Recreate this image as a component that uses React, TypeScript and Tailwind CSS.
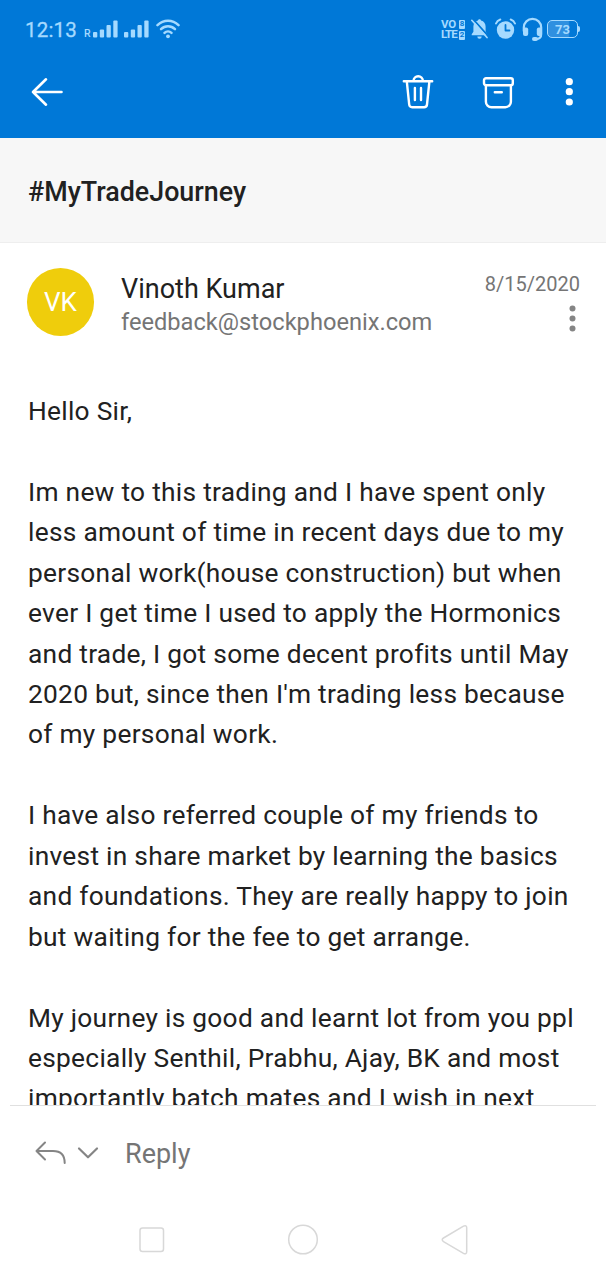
import type { ReactNode } from "react";

const paragraphs: string[][] = [
  ["Hello Sir,"],
  [
    "Im new to this trading and I have spent only",
    "less amount of time in recent days due to my",
    "personal work(house construction) but when",
    "ever I get time I used to apply the Hormonics",
    "and trade, I got some decent profits until May",
    "2020 but, since then I'm trading less because",
    "of my personal work.",
  ],
  [
    "I have also referred couple of my friends to",
    "invest in share market by learning the basics",
    "and foundations. They are really happy to join",
    "but waiting for the fee to get arrange.",
  ],
  [
    "My journey is good and learnt lot from you ppl",
    "especially Senthil, Prabhu, Ajay, BK and most",
    "importantly batch mates and I wish in next",
  ],
];

function Icon({ w, h, className, children }: { w: number; h: number; className?: string; children: ReactNode }) {
  return (
    <svg width={w} height={h} viewBox={`0 0 ${w} ${h}`} fill="none" strokeLinecap="round" strokeLinejoin="round" className={`shrink-0 ${className ?? ""}`}>
      {children}
    </svg>
  );
}

function Signal() {
  return (
    <Icon w={25} h={18}>
      <g fill="currentColor">
        <rect x="0" y="12" width="4.300" height="5.500" rx="1" />
        <rect x="6.800" y="9.500" width="4.300" height="8" rx="1" />
        <rect x="13.500" y="5" width="4.300" height="12.500" rx="1" />
        <rect x="20.300" y="0.500" width="4.300" height="17" rx="1" />
      </g>
    </Icon>
  );
}

function StatusBar() {
  return (
    <div className="flex h-[58px] items-center justify-between pl-[25px] pr-[26px] text-[#a5daff]">
      <div className="flex items-center">
        <span className="w-[59px] pt-[2px] text-[20.500px] leading-6 tracking-[0.200px] [-webkit-text-stroke:0.300px_currentColor]">12:13</span>
        <span className="mt-[9px] w-[9px] text-[10.500px] font-medium leading-3">R</span>
        <Signal />
        <div className="w-[6px]" />
        <Signal />
        <div className="w-[7px]" />
        <Icon w={24} h={20}>
          <g stroke="currentColor" strokeWidth="2.500">
            <path d="M1.500 6.200C7.500.4 16.500 .4 22.500 6.200" />
            <path d="M5 10.200c4-3.800 10-3.800 14 0" />
            <path d="M8.500 13.900c2-1.900 5-1.900 7 0" />
          </g>
          <circle cx="12" cy="17.300" r="1.900" fill="currentColor" />
        </Icon>
      </div>
      <div className="flex items-center">
        <div className="mr-[6px] mt-[2px] grid w-[24px] grid-cols-[18px_6px] text-[11.500px] font-bold">
          <span className="flex h-[10px] items-center leading-none tracking-[-0.300px]">VO</span>
          <span className="flex h-[9px] items-center justify-center rounded-[1px] bg-[#a5daff] text-[8px] leading-none text-[#0078d7]">8</span>
          <span className="flex h-[11px] items-center leading-none tracking-[-0.900px]">LTE</span>
          <span className="mt-px flex h-[9px] items-center justify-center rounded-[1px] bg-[#a5daff] text-[8px] leading-none text-[#0078d7]">2</span>
        </div>
        <Icon w={17} h={22}>
          <path d="M8.500 1.200c.9 0 1.500.6 1.500 1.400 3 .7 4.600 3 4.600 6v5.200l1.700 2.400v1H.7v-1l1.700-2.400V8.600c0-3 1.700-5.300 4.600-6 0-.8.6-1.400 1.500-1.400ZM6.300 18.500h4.400a2.200 2.200 0 0 1-4.400 0Z" fill="currentColor" />
          <path d="M1.500 .5 17.500 18.500" stroke="#0078d7" strokeWidth="1.800" />
          <path d="M.8 2.300 16 19.500" stroke="currentColor" strokeWidth="1.700" />
        </Icon>
        <div className="w-[7px]" />
        <Icon w={21} h={22}>
          <circle cx="10.500" cy="12" r="8.700" fill="currentColor" />
          <path d="M10.500 7v5.500h4" stroke="#0078d7" strokeWidth="1.800" />
          <path d="M1 5.500C1.800 3.500 3.300 2.200 5.300 1.500M20 5.500c-.8-2-2.300-3.300-4.300-4" stroke="currentColor" strokeWidth="2" />
        </Icon>
        <div className="w-[6px]" />
        <Icon w={21} h={25}>
          <path d="M1.800 14V10.500a8.700 8.700 0 0 1 17.400 0V17c0 3-1.500 5-5 5" stroke="currentColor" strokeWidth="2.200" />
          <rect x="1" y="10.500" width="5.200" height="8.500" rx="2" fill="currentColor" />
          <rect x="14.800" y="10.500" width="5.200" height="8.500" rx="2" fill="currentColor" />
          <rect x="10" y="20" width="6" height="4" rx="2" fill="currentColor" />
        </Icon>
        <div className="w-[4px]" />
        <div className="flex items-center">
          <div className="flex h-[18px] w-[31px] items-center justify-center rounded-[5px] border-[1.500px] border-[#a5daff] bg-linear-to-r from-[#2f90e0] from-70% to-[#0078d7] to-75% text-[13px] font-bold leading-none">73</div>
          <div className="h-[6px] w-[2px] rounded-r bg-[#a5daff]" />
        </div>
      </div>
    </div>
  );
}

function ActionBar() {
  return (
    <div className="flex h-[80px] items-start pl-[31px] pt-[15px] text-white">
      <Icon w={33} h={38}>
        <path d="M30.500 19H2M15 6.300 2 19l13 12.700" stroke="currentColor" strokeWidth="2.600" />
      </Icon>
      <Icon w={32} h={38} className="ml-[338px]">
        <g stroke="currentColor" strokeWidth="2.400">
          <path d="M1.800 8.300h28.400M11.500 8a4.700 4.700 0 0 1 9.400 0M4.800 8.300l2.400 23.200c.2 1.700 1.200 2.700 2.900 2.700h12c1.700 0 2.700-1 2.900-2.700L27.400 8.300" />
          <path d="M12.900 15v12M19 15v12" />
        </g>
      </Icon>
      <Icon w={33} h={38} className="ml-[48px]">
        <g stroke="currentColor" strokeWidth="2.400">
          <rect x="2" y="5.200" width="28.800" height="7" rx="2" />
          <path d="M3.900 12.200V28.700a5.500 5.500 0 0 0 5.500 5.500h14a5.500 5.500 0 0 0 5.500-5.500V12.200M12.800 19.300h7" />
        </g>
      </Icon>
      <Icon w={8} h={38} className="ml-[50px]">
        <g fill="currentColor">
          <circle cx="4.300" cy="8.700" r="3.600" />
          <circle cx="4.300" cy="18.700" r="3.600" />
          <circle cx="4.300" cy="29" r="3.600" />
        </g>
      </Icon>
    </div>
  );
}

export default function App() {
  return (
    <div className="flex h-[1280px] w-[606px] flex-col overflow-hidden bg-white font-['Roboto',sans-serif] text-[#212121]">
      <header className="h-[138px] shrink-0 bg-[#0078d7]">
        <StatusBar />
        <ActionBar />
      </header>

      <div className="flex h-[105px] shrink-0 items-center border-b border-[#eeeeee] bg-[#f7f7f7] pl-[28px] pt-[4px]">
        <h1 className="whitespace-nowrap text-[26.850px] font-medium leading-8">#MyTradeJourney</h1>
      </div>

      <section className="flex h-[148px] shrink-0 pl-[27px] pt-[25px]">
        <div className="flex h-[68px] w-[67px] shrink-0 items-center justify-center rounded-full bg-[#efcd0c] pt-px text-[26px] text-white">VK</div>
        <div className="ml-[27px] w-[350px] pt-[5px]">
          <div className="whitespace-nowrap text-[27px] leading-[33px]">Vinoth Kumar</div>
          <div className="whitespace-nowrap text-[23.650px] leading-[32px] text-[#757575]">feedback@stockphoenix.com</div>
        </div>
        <div className="flex w-[109px] flex-col items-end pt-[4px] text-[#757575]">
          <span className="whitespace-nowrap text-[20px] leading-6">8/15/2020</span>
          <Icon w={8} h={30} className="mr-[4px] mt-[6px]">
            <g fill="#858585">
              <circle cx="4.500" cy="6.500" r="3" />
              <circle cx="4.500" cy="16.500" r="3" />
              <circle cx="4.500" cy="26.500" r="3" />
            </g>
          </Icon>
        </div>
      </section>

      <main className="flex h-[714px] shrink-0 flex-col gap-[40.430px] overflow-hidden pl-[28px] text-[26.300px] leading-[40.430px] tracking-[0.280px]">
        {paragraphs.map((lines) => (
          <div key={lines[0]} className="shrink-0">
            {lines.map((line) => (
              <div key={line} className="whitespace-nowrap">{line}</div>
            ))}
          </div>
        ))}
      </main>

      <footer className="flex min-h-0 flex-1 flex-col">
        <div className="mx-[10px] h-px bg-[#e0e0e0]" />
        <div className="flex h-[94px] items-center pl-[34px] text-[#757575]">
          <Icon w={34} h={26}>
            <path d="M11 2.500 2.500 11l8.500 8.500M2.500 11h16.500c8 0 11.700 4 11.700 12" stroke="#858585" strokeWidth="2" />
          </Icon>
          <Icon w={22} h={14} className="ml-[9px]">
            <path d="m2 2.500 9 8.800L20 2.500" stroke="#858585" strokeWidth="2.200" />
          </Icon>
          <span className="ml-[26px] pt-[2px] text-[27px] leading-8">Reply</span>
        </div>
        <div className="flex h-[80px] items-center pl-[139px]">
          <Icon w={26} h={32}>
            <rect x="1" y="4" width="23.500" height="23.500" rx="2.500" stroke="#d8d8d8" strokeWidth="1.500" />
          </Icon>
          <Icon w={32} h={32} className="ml-[122px]">
            <circle cx="16" cy="15.500" r="14.300" stroke="#d8d8d8" strokeWidth="1.500" />
          </Icon>
          <Icon w={28} h={32} className="ml-[122px]">
            <path d="M2.500 14 22.500 2.200c2-1 3.200-.2 3.200 1.600v24c0 1.800-1.200 2.600-3.200 1.600L2.500 17.600c-1.700-1-1.700-2.600 0-3.600Z" stroke="#d8d8d8" strokeWidth="1.500" />
          </Icon>
        </div>
      </footer>
    </div>
  );
}
